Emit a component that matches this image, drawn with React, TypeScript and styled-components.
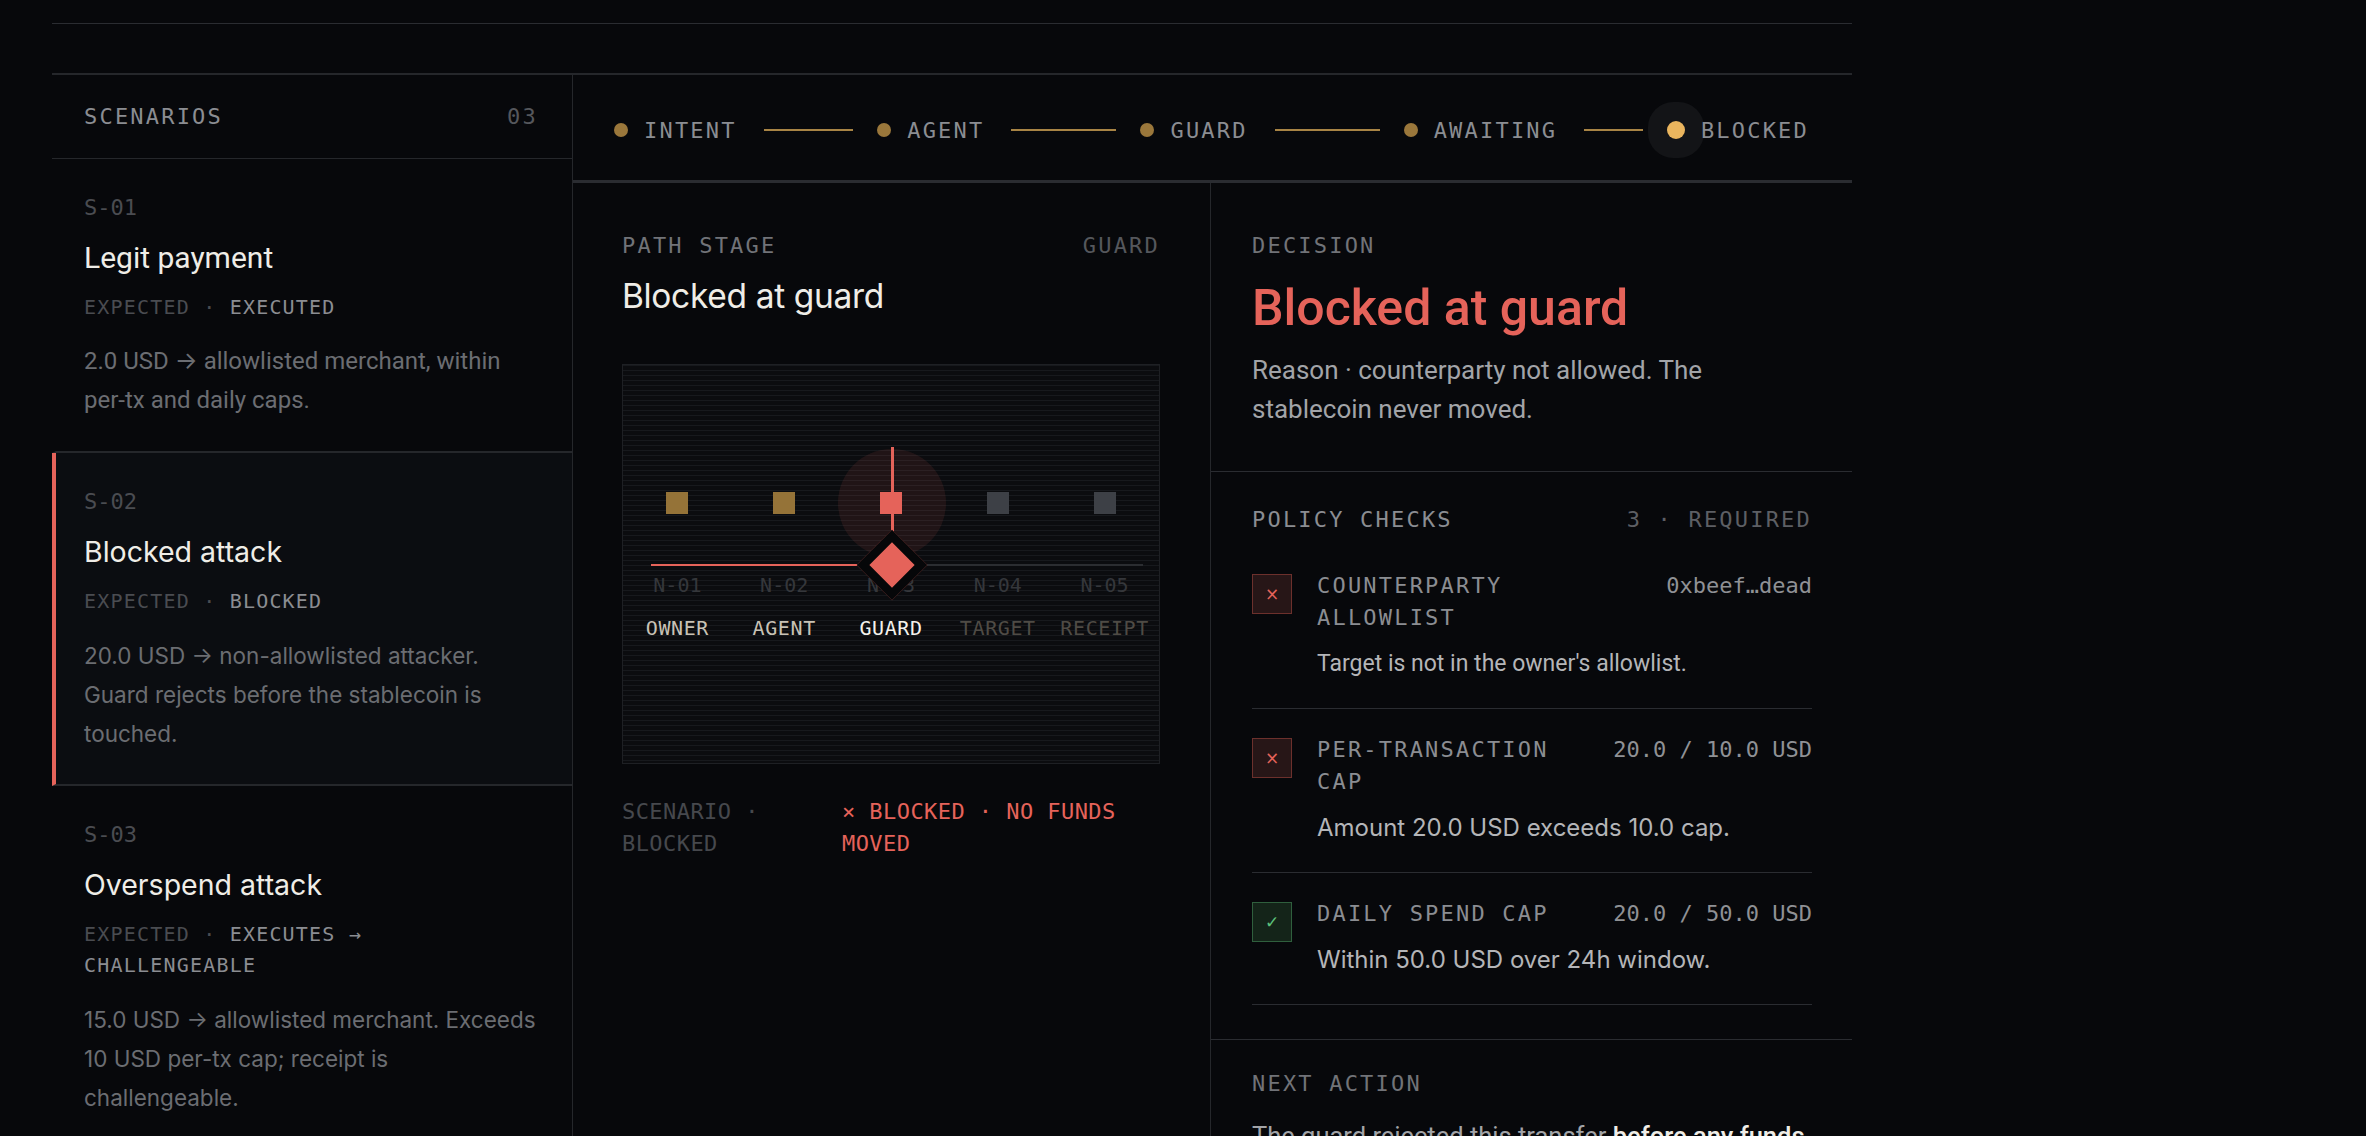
import React from "react";
import styled, { createGlobalStyle } from "styled-components";

const C = {
  bg: "#07080b",
  card: "#0b0d11",
  line: "#25272b",
  lineLight: "#2a2c31",
  text: "#efede7",
  muted: "#8b8d92",
  label: "#717378",
  dim: "#4a4c51",
  body: "#a2a4a8",
  desc: "#6b6d72",
  gold: "#9a773b",
  goldBright: "#eab55e",
  red: "#e5635a",
  green: "#5cc07a",
};

const MONO = `"DejaVu Sans Mono", "Liberation Mono", monospace`;
const SANS = `"Roboto", "Inter", sans-serif`;
const GEO = `"Inter", "Roboto", sans-serif`;

const Global = createGlobalStyle`
  html, body { margin: 0; padding: 0; background: ${C.bg}; overflow: hidden; }
  body { font-family: ${SANS}; color: ${C.text}; -webkit-font-smoothing: antialiased; }
  * { box-sizing: border-box; }
`;

const Page = styled.div`
  width: 1800px;
  margin-left: 52px;
  padding-top: 23px;
`;

const TopBand = styled.div`
  height: 52px;
  border-top: 1px solid ${C.lineLight};
  border-bottom: 2px solid ${C.line};
`;

const Main = styled.div`
  display: grid;
  grid-template-columns: 521px 1fr;
`;

/* ---------- Left column ---------- */
const Sidebar = styled.aside`
  border-right: 1px solid ${C.line};
  min-height: 1100px;
`;

const SideHeader = styled.div`
  height: 84px;
  display: flex;
  align-items: center;
  justify-content: space-between;
  padding: 0 34px 0 32px;
  border-bottom: 1px solid ${C.line};
  font-family: ${MONO};
  font-size: 22px;
  letter-spacing: 0.1em;
`;

const Mono = styled.span<{ $c?: string }>`
  font-family: ${MONO};
  color: ${(p) => p.$c || C.muted};
`;

const Card = styled.div<{ $active?: boolean }>`
  border-left: 4px solid ${(p) => (p.$active ? C.red : "transparent")};
  background: ${(p) => (p.$active ? C.card : "transparent")};
  border-bottom: 2px solid ${C.line};
  padding: 36px 32px 31px 28px;
`;

const CardId = styled.div`
  font-family: ${MONO};
  font-size: 22px;
  line-height: 26px;
  color: ${C.dim};
`;

const CardTitle = styled.div<{ $geo?: boolean }>`
  margin-top: 19px;
  font-family: ${(p) => (p.$geo ? GEO : SANS)};
  font-size: ${(p) => (p.$geo ? "28.5px" : "30px")};
  line-height: 36px;
  color: ${C.text};
`;

const Expected = styled.div`
  margin-top: 16px;
  font-family: ${MONO};
  font-size: 20px;
  line-height: 31px;
  letter-spacing: 1.2px;
  color: ${C.dim};
  & b {
    font-weight: normal;
    color: ${C.muted};
  }
`;

const CardDesc = styled.p<{ $geo?: boolean }>`
  margin: 19px 0 0;
  font-family: ${(p) => (p.$geo ? GEO : SANS)};
  font-size: ${(p) => (p.$geo ? "22.5px" : "24px")};
  line-height: 39px;
  color: ${C.desc};
`;

/* ---------- Right area ---------- */
const Work = styled.section``;

const Stepper = styled.div`
  height: 108px;
  padding: 5px 43px 0 41px;
  display: grid;
  grid-template-columns: repeat(4, 1fr) auto;
  align-items: center;
  border-bottom: 3px solid ${C.lineLight};
`;

const Step = styled.div`
  display: flex;
  align-items: center;
`;

const StepDot = styled.span<{ $active?: boolean }>`
  flex: none;
  width: ${(p) => (p.$active ? 18 : 14)}px;
  height: ${(p) => (p.$active ? 18 : 14)}px;
  border-radius: 50%;
  background: ${(p) => (p.$active ? C.goldBright : C.gold)};
  box-shadow: ${(p) => (p.$active ? "0 0 0 19px #131417" : "none")};
`;

const StepLabel = styled.span`
  margin-left: 16px;
  font-family: ${MONO};
  font-size: 22px;
  letter-spacing: 0.1em;
  color: ${C.muted};
  white-space: nowrap;
`;

const Connector = styled.span`
  flex: 1;
  height: 2px;
  margin: 0 24px 0 27px;
  background: #a88445;
`;

const Columns = styled.div`
  display: grid;
  grid-template-columns: 638px 1fr;
`;

const PathPanel = styled.div`
  border-right: 1px solid ${C.line};
  padding: 50px 50px 0 49px;
  min-height: 960px;
`;

const PanelHead = styled.div`
  display: flex;
  justify-content: space-between;
  font-family: ${MONO};
  font-size: 22px;
  line-height: 26px;
  letter-spacing: 0.1em;
  color: ${C.label};
`;

const HeadAside = styled.span<{ $c?: string }>`
  color: ${(p) => p.$c || "#55575c"};
`;

const PathTitle = styled.h2`
  margin: 17px 0 0;
  font-family: ${GEO};
  font-weight: 400;
  font-size: 33.5px;
  line-height: 40px;
  letter-spacing: -0.01em;
  color: ${C.text};
`;

const Diagram = styled.div`
  position: relative;
  margin-top: 48px;
  height: 400px;
  border: 1px solid #1e2024;
  background-color: #0b0c0f;
  background-image: repeating-linear-gradient(
    to bottom,
    #17191d 0px,
    #17191d 1px,
    transparent 1px,
    transparent 5px
  );
  overflow: hidden;
`;

const Halo = styled.div`
  position: absolute;
  left: 215px;
  top: 84px;
  width: 108px;
  height: 108px;
  border-radius: 50%;
  background: rgba(229, 99, 90, 0.1);
`;

const NodeRow = styled.div`
  position: relative;
  display: grid;
  grid-template-columns: repeat(5, 1fr);
  padding: 127px 1px 0;
`;

const Node = styled.div`
  display: flex;
  flex-direction: column;
  align-items: center;
`;

const NodeSquare = styled.span<{ $c: string }>`
  width: 22px;
  height: 22px;
  background: ${(p) => p.$c};
`;

const NodeCode = styled.span`
  margin-top: 59px;
  font-family: ${MONO};
  font-size: 20px;
  line-height: 24px;
  color: #35373b;
`;

const NodeName = styled.span<{ $c: string }>`
  margin-top: 18px;
  font-family: ${MONO};
  font-size: 20px;
  line-height: 26px;
  letter-spacing: 0.03em;
  color: ${(p) => p.$c};
`;

const Track = styled.div<{ $red?: boolean; $w: number }>`
  position: absolute;
  left: 28px;
  top: 199px;
  height: 2px;
  width: ${(p) => p.$w}px;
  background: ${(p) => (p.$red ? C.red : "#2b2d31")};
`;

const Probe = styled.div`
  position: absolute;
  left: 268px;
  top: 82px;
  width: 3px;
  height: 118px;
  background: ${C.red};
`;

const Diamond = styled.div`
  position: absolute;
  left: 244px;
  top: 175px;
  width: 50px;
  height: 50px;
  background: ${C.red};
  border: 9px solid #060709;
  transform: rotate(45deg);
`;

const Outcome = styled.div`
  margin-top: 32px;
  display: grid;
  grid-template-columns: 220px 1fr;
  font-family: ${MONO};
  font-size: 22px;
  line-height: 32px;
  letter-spacing: 0.02em;
`;

const OutcomeCell = styled.div<{ $c: string }>`
  color: ${(p) => p.$c};
`;

/* ---------- Decision column ---------- */
const DecisionPanel = styled.div``;

const Section = styled.div<{ $pt: number; $pb: number; $top?: boolean }>`
  padding: ${(p) => p.$pt}px 40px ${(p) => p.$pb}px 41px;
  border-top: ${(p) => (p.$top ? `1px solid ${C.lineLight}` : "none")};
`;

const Verdict = styled.h1`
  margin: 21px 0 0;
  font-family: ${SANS};
  font-weight: 500;
  font-size: 50px;
  line-height: 56px;
  color: ${C.red};
`;

const Reason = styled.p`
  margin: 15px 0 0;
  font-family: ${SANS};
  font-size: 26px;
  line-height: 39px;
  color: ${C.body};
`;

const CheckList = styled.div`
  margin-top: 12px;
`;

const Check = styled.div`
  display: grid;
  grid-template-columns: 40px 1fr;
  column-gap: 25px;
  padding: 25px 0 26px;
  border-bottom: 1px solid ${C.lineLight};
`;

const CheckBox = styled.span<{ $ok?: boolean }>`
  margin-top: 4px;
  width: 40px;
  height: 40px;
  display: flex;
  align-items: center;
  justify-content: center;
  border: 1px solid ${(p) => (p.$ok ? "#2f5f3d" : "#6c302c")};
  background: ${(p) => (p.$ok ? "#142419" : "#271617")};
  color: ${(p) => (p.$ok ? C.green : C.red)};
  font-family: "DejaVu Sans", sans-serif;
  font-size: 17px;
`;

const CheckHead = styled.div`
  display: flex;
  justify-content: space-between;
  align-items: flex-start;
  gap: 20px;
`;

const CheckName = styled.span`
  max-width: 250px;
  font-family: ${MONO};
  font-size: 22px;
  line-height: 32px;
  letter-spacing: 0.1em;
  color: ${C.muted};
`;

const CheckValue = styled.span`
  font-family: ${MONO};
  font-size: 22px;
  line-height: 32px;
  color: #8f9195;
  white-space: nowrap;
`;

const CheckDesc = styled.p<{ $geo?: boolean }>`
  margin: 12px 0 0;
  font-family: ${(p) => (p.$geo ? GEO : SANS)};
  font-size: ${(p) => (p.$geo ? "24px" : "23px")};
  line-height: 36px;
  color: #b4b5b8;
`;

const NextText = styled.p`
  margin: 20px 0 0;
  font-family: ${SANS};
  font-size: 25.5px;
  line-height: 39px;
  color: ${C.body};
  & strong {
    font-weight: 500;
    color: ${C.text};
  }
`;

const scenarios = [
  {
    id: "S-01",
    title: "Legit payment",
    expected: "EXECUTED",
    desc: "2.0 USD → allowlisted merchant, within per-tx and daily caps.",
    geo: false,
  },
  {
    id: "S-02",
    title: "Blocked attack",
    expected: "BLOCKED",
    desc: "20.0 USD → non-allowlisted attacker. Guard rejects before the stablecoin is touched.",
    geo: true,
    active: true,
  },
  {
    id: "S-03",
    title: "Overspend attack",
    expected: "EXECUTES → CHALLENGEABLE",
    desc: "15.0 USD → allowlisted merchant. Exceeds 10 USD per-tx cap; receipt is challengeable.",
    geo: true,
  },
];

const steps = ["INTENT", "AGENT", "GUARD", "AWAITING", "BLOCKED"];

const nodes = [
  { code: "N-01", name: "OWNER", sq: "#957338", c: "#c8c2b5" },
  { code: "N-02", name: "AGENT", sq: "#957338", c: "#c8c2b5" },
  { code: "N-03", name: "GUARD", sq: C.red, c: "#f4f2ec" },
  { code: "N-04", name: "TARGET", sq: "#3d4046", c: "#4f4b45" },
  { code: "N-05", name: "RECEIPT", sq: "#3d4046", c: "#4f4b45" },
];

const checks = [
  {
    name: "COUNTERPARTY ALLOWLIST",
    value: "0xbeef…dead",
    desc: "Target is not in the owner's allowlist.",
    ok: false,
    geo: false,
  },
  {
    name: "PER-TRANSACTION CAP",
    value: "20.0 / 10.0 USD",
    desc: "Amount 20.0 USD exceeds 10.0 cap.",
    ok: false,
    geo: true,
  },
  {
    name: "DAILY SPEND CAP",
    value: "20.0 / 50.0 USD",
    desc: "Within 50.0 USD over 24h window.",
    ok: true,
    geo: true,
  },
];

export default function App() {
  return (
    <>
      <Global />
      <Page>
        <TopBand />
        <Main>
          <Sidebar>
            <SideHeader>
              <Mono>SCENARIOS</Mono>
              <Mono $c="#55575c">03</Mono>
            </SideHeader>
            {scenarios.map((s) => (
              <Card key={s.id} $active={s.active}>
                <CardId>{s.id}</CardId>
                <CardTitle $geo={s.geo}>{s.title}</CardTitle>
                <Expected>
                  EXPECTED · <b>{s.expected}</b>
                </Expected>
                <CardDesc $geo={s.geo}>{s.desc}</CardDesc>
              </Card>
            ))}
          </Sidebar>

          <Work>
            <Stepper>
              {steps.map((st, i) => {
                const last = i === steps.length - 1;
                return (
                  <Step key={st}>
                    <StepDot $active={last} />
                    <StepLabel>{st}</StepLabel>
                    {!last && <Connector />}
                  </Step>
                );
              })}
            </Stepper>

            <Columns>
              <PathPanel>
                <PanelHead>
                  <span>PATH STAGE</span>
                  <HeadAside>GUARD</HeadAside>
                </PanelHead>
                <PathTitle>Blocked at guard</PathTitle>
                <Diagram>
                  <Halo />
                  <Track $w={492} />
                  <Track $red $w={241} />
                  <Probe />
                  <NodeRow>
                    {nodes.map((n) => (
                      <Node key={n.code}>
                        <NodeSquare $c={n.sq} />
                        <NodeCode>{n.code}</NodeCode>
                        <NodeName $c={n.c}>{n.name}</NodeName>
                      </Node>
                    ))}
                  </NodeRow>
                  <Diamond />
                </Diagram>
                <Outcome>
                  <OutcomeCell $c="#46484d">SCENARIO · BLOCKED</OutcomeCell>
                  <OutcomeCell $c={C.red}>× BLOCKED · NO FUNDS MOVED</OutcomeCell>
                </Outcome>
              </PathPanel>

              <DecisionPanel>
                <Section $pt={50} $pb={42}>
                  <PanelHead>
                    <span>DECISION</span>
                  </PanelHead>
                  <Verdict>Blocked at guard</Verdict>
                  <Reason>
                    Reason · counterparty not allowed. The stablecoin never moved.
                  </Reason>
                </Section>

                <Section $pt={35} $pb={34} $top>
                  <PanelHead>
                    <Mono>POLICY CHECKS</Mono>
                    <HeadAside $c="#5d5f64">3 · REQUIRED</HeadAside>
                  </PanelHead>
                  <CheckList>
                    {checks.map((c) => (
                      <Check key={c.name}>
                        <CheckBox $ok={c.ok}>{c.ok ? "✓" : "×"}</CheckBox>
                        <div>
                          <CheckHead>
                            <CheckName>{c.name}</CheckName>
                            <CheckValue>{c.value}</CheckValue>
                          </CheckHead>
                          <CheckDesc $geo={c.geo}>{c.desc}</CheckDesc>
                        </div>
                      </Check>
                    ))}
                  </CheckList>
                </Section>

                <Section $pt={31} $pb={40} $top>
                  <PanelHead>
                    <span>NEXT ACTION</span>
                  </PanelHead>
                  <NextText>
                    The guard rejected this transfer <strong>before any funds moved</strong>.
                    No funds need to be recovered.
                  </NextText>
                </Section>
              </DecisionPanel>
            </Columns>
          </Work>
        </Main>
      </Page>
    </>
  );
}
